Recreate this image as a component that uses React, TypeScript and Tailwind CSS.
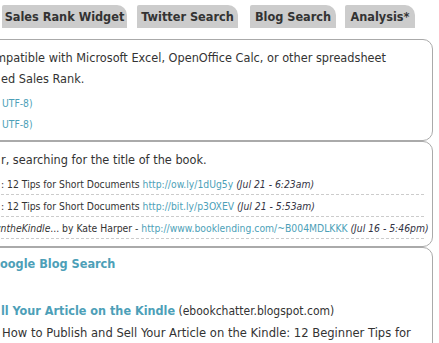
import React from 'react';

const font = { fontFamily: '"DejaVu Sans Condensed", "DejaVu Sans", Tahoma, sans-serif' };

const tabs = [
  { name: 'Sales Rank Widget', cls: 'w-[125px] ml-[2px]' },
  { name: 'Twitter Search', cls: 'w-[101px] ml-[10px]' },
  { name: 'Blog Search', cls: 'w-[86px] ml-[12px]' },
  { name: 'Analysis*', cls: 'w-[70px] ml-[9px]' },
];

export default function App() {
  return (
    <div className="w-[439px] h-[343px] overflow-hidden bg-white text-[#333]" style={font}>
      {/* Tabs */}
      <div className="flex pt-[5px]">
        {tabs.map((t) => (
          <div
            key={t.name}
            className={`${t.cls} h-[23px] text-center bg-[#cccccc] rounded-tr-[10px] rounded-tl-[2px] text-[12.6px] font-bold leading-[23px] text-[#333]`}
          >
            {t.name}
          </div>
        ))}
      </div>

      <div className="mt-[11px] -ml-[12px] w-[445px]">
        {/* Box 1 */}
        <div className="border border-[#aaaaaa] rounded-r-[10px] h-[102px] pt-[7px] pl-[12px]">
          <div className="h-[21px] leading-[21px] text-[12.6px] whitespace-nowrap -ml-[6px]">
            mpatible with Microsoft Excel, OpenOffice Calc, or other spreadsheet
          </div>
          <div className="h-[21px] leading-[21px] text-[12.6px] whitespace-nowrap">ed Sales Rank.</div>
          <div className="mt-[4px] h-[21px] leading-[21px] text-[10.3px] text-[#4d9fb8] whitespace-nowrap pl-[1px]">UTF-8)</div>
          <div className="h-[21px] leading-[21px] text-[10.3px] text-[#4d9fb8] whitespace-nowrap pl-[1px]">UTF-8)</div>
        </div>

        {/* Box 2 */}
        <div className="border border-[#aaaaaa] rounded-r-[10px] h-[106px] pt-[7px] pl-[12px]">
          <div className="h-[21px] leading-[21px] text-[12.6px] whitespace-nowrap">
            r, searching for the title of the book.
          </div>
          <div className="mt-[3px] mr-[8px] -ml-[12px] pl-[12px]">
            <div className="h-[22px] leading-[22px] text-[10.3px] whitespace-nowrap border-b border-dashed border-[#cccccc]">
              : 12 Tips for Short Documents <span className="text-[#4d9fb8]">http://ow.ly/1dUg5y</span>{' '}
              <i className="text-[#334]">(Jul 21 - 6:23am)</i>
            </div>
            <div className="h-[22px] leading-[22px] text-[10.3px] whitespace-nowrap border-b border-dashed border-[#cccccc]">
              : 12 Tips for Short Documents <span className="text-[#4d9fb8]">http://bit.ly/p3OXEV</span>{' '}
              <i className="text-[#334]">(Jul 21 - 5:53am)</i>
            </div>
            <div className="h-[22px] leading-[22px] text-[10.3px] whitespace-nowrap border-b border-dashed border-[#cccccc]">
              <span className="-ml-[8px]">
                <i>wntheKindle</i>... by Kate Harper - <span className="text-[#4d9fb8]">http://www.booklending.com/~B004MDLKKK</span>{' '}
                <i className="text-[#334]">(Jul 16 - 5:46pm)</i>
              </span>
            </div>
          </div>
        </div>

        {/* Box 3 */}
        <div className="border border-[#aaaaaa] rounded-r-[10px] h-[120px] pt-[6px] pl-[12px]">
          <div className="h-[20px] leading-[20px] text-[12.6px] font-bold text-[#4d9fb8] whitespace-nowrap -ml-[1px]">
            oogle Blog Search
          </div>
          <div className="mt-[26px] h-[22px] leading-[22px] text-[12px] whitespace-nowrap">
            <span className="font-bold text-[#4d9fb8] text-[12.5px]">ll Your Article on the Kindle</span> (ebookchatter.blogspot.com)
          </div>
          <div className="h-[22px] leading-[22px] text-[12.85px] whitespace-nowrap pl-[1px]">
            How to Publish and Sell Your Article on the Kindle: 12 Beginner Tips for
          </div>
        </div>
      </div>
    </div>
  );
}
